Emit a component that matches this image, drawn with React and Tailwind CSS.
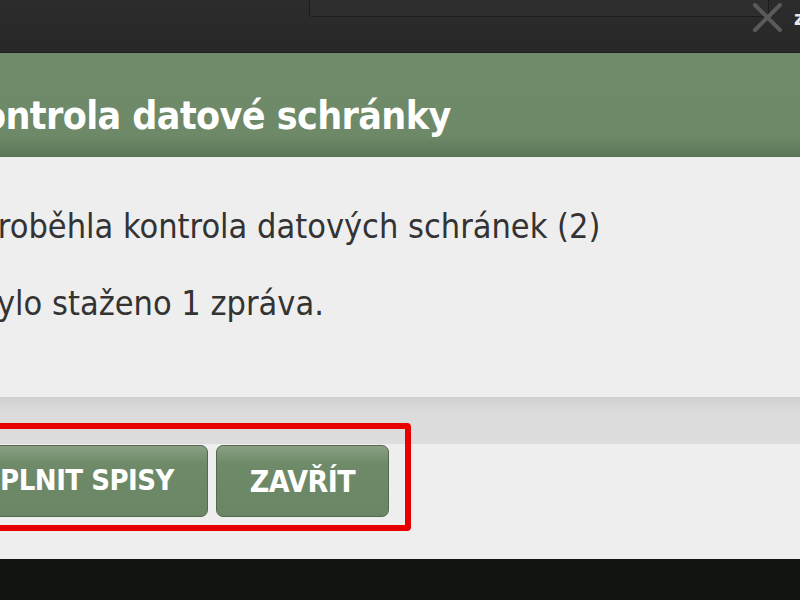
export default function App() {
  const font = { fontFamily: '"DejaVu Sans Condensed", "DejaVu Sans", sans-serif' };
  return (
    <div className="w-[800px] h-[600px] overflow-hidden flex flex-col bg-[#111411]" style={font}>
      {/* top dark bar */}
      <div className="relative h-[53px] shrink-0 bg-gradient-to-b from-[#2c2c2c] to-[#282828] border-b border-[#1c201b]">
        <div className="absolute left-[309px] top-[-4px] w-[460px] h-[21px] bg-[#2e2e2e] border border-[#1d1d1d] rounded-[3px]" />
        <svg className="absolute left-[752px] top-[3px]" width="31" height="29" viewBox="0 0 31 29">
          <path d="M3 2 L28 27 M28 2 L3 27" stroke="#5a5a5a" strokeWidth="4" strokeLinecap="round" />
        </svg>
        <span className="absolute left-[794px] top-[8px] text-[20px] font-bold text-[#e8e8e8] leading-none">z</span>
      </div>
      {/* header */}
      <div className="h-[104px] shrink-0 bg-gradient-to-b from-[#6f8b69] via-[#6d8967] via-80% to-[#5b7556] pt-[40px]">
        <h1 className="ml-[-44px] text-[39px] leading-[46px] font-bold text-white whitespace-nowrap tracking-[-0.6px]">
          Kontrola datové schránky
        </h1>
      </div>
      {/* body */}
      <div className="h-[240px] shrink-0 bg-[#eeeeee] flex flex-col pt-[49px] gap-[37px] text-[#333333] text-[34px] whitespace-nowrap">
        <p className="ml-[-20px] leading-[40px]">Proběhla kontrola datových schránek (2)</p>
        <p className="ml-[-24px] leading-[40px]">Bylo staženo 1 zpráva.</p>
      </div>
      {/* divider strip */}
      <div className="h-[47px] shrink-0 bg-gradient-to-b from-[#cfcfcf] via-[#dcdcdc] via-30% to-[#dddddd]" />
      {/* footer */}
      <div className="relative h-[115px] shrink-0 bg-[#eeeeee]">
        <div className="absolute left-[-20px] top-[-21px] w-[431px] h-[108px] border-[6px] border-[#e80000] rounded-[4px]" />
        <div className="flex gap-[8px] pt-[1px] ml-[-60px]">
          <button className="w-[268px] h-[72px] rounded-[7px] border border-[#55694f] bg-gradient-to-b from-[#8ba085] via-[#6e8a68] via-25% to-[#6b8665] text-white text-[29px] font-bold tracking-[-0.5px] flex items-center justify-end pr-[33px]">
            DOPLNIT SPISY
          </button>
          <button className="w-[173px] h-[72px] rounded-[7px] border border-[#55694f] bg-gradient-to-b from-[#8ba085] via-[#6e8a68] via-25% to-[#6b8665] text-white text-[30px] font-bold tracking-[-0.5px] flex items-center justify-center">
            ZAVŘÍT
          </button>
        </div>
      </div>
      <div className="flex-1 bg-[#111411]" />
    </div>
  );
}
